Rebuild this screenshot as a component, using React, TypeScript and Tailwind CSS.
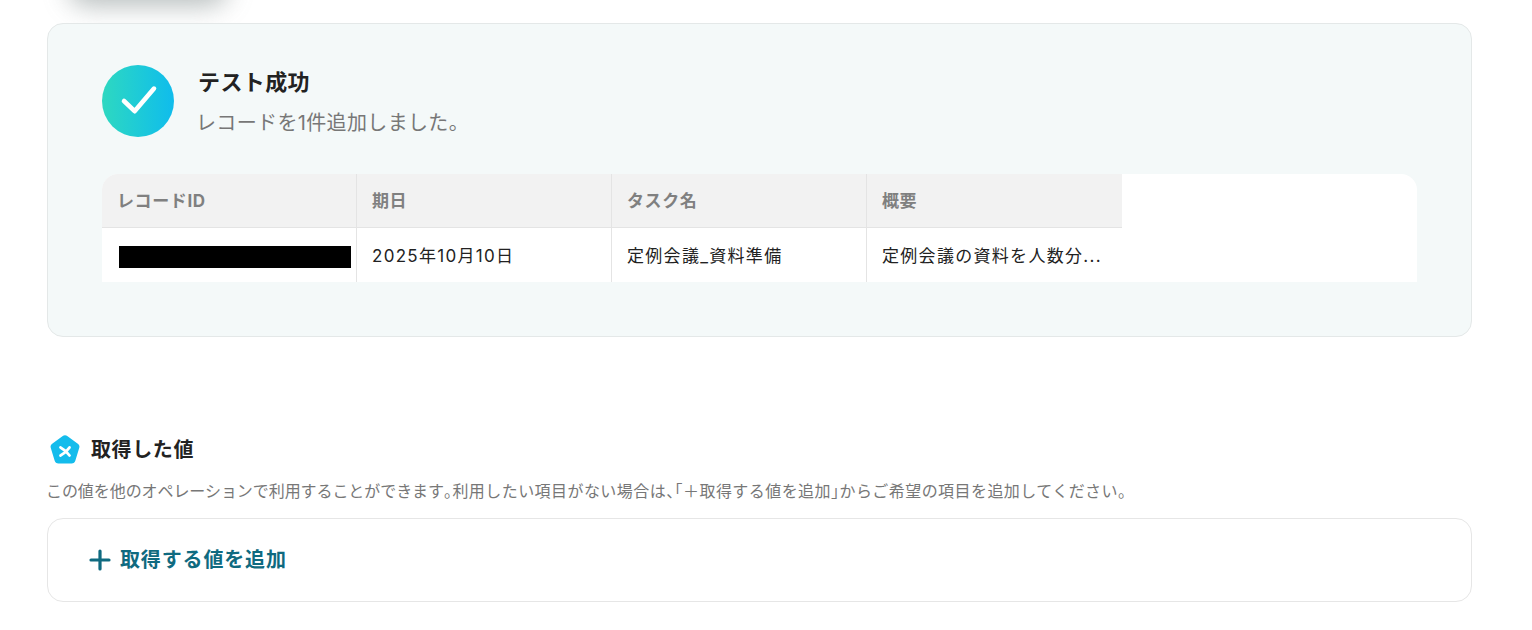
import React from "react";

const columns = ["レコードID", "期日", "タスク名", "概要"];

const Logo = () => (
  <svg width="32" height="32" viewBox="0 0 32 32" className="shrink-0 mt-[2px]">
    <path
      d="M13.4 1.3a4.4 4.4 0 0 1 5.2 0l10.2 7.4a3.8 3.8 0 0 1 1.4 4.3l-3.8 12.5a4 4 0 0 1-3.9 2.9H9.5a4 4 0 0 1-3.9-2.9L1.8 13a3.8 3.8 0 0 1 1.4-4.3z"
      fill="#14bcec"
    />
    <path d="M11.5 12.5c3.2 1.6 6 4.2 9 8M20.5 12.5c-2.2 3.4-5 6-9 8" fill="none" stroke="#fff" strokeWidth="2.8" strokeLinecap="round" />
  </svg>
);

const App = () => {
  return (
    <div className="relative w-[1532px] h-[630px] overflow-hidden bg-white font-['Inter','Noto_Sans_CJK_JP',sans-serif]">
      <div className="absolute left-[68px] top-[-34px] w-[160px] h-[40px] rounded-full bg-[#9aa3a3] blur-[13px] opacity-70" />

      <div className="relative px-[47px] pt-[23px] w-[1519px]">
        <section className="h-[314px] rounded-2xl border border-[#e4e8e8] bg-[#f4f9f9] pt-[41px] pl-[54px] pr-[54px]">
          <div className="flex gap-6">
            <div className="w-[72px] h-[72px] rounded-full bg-gradient-to-r from-[#2ed8c0] to-[#10bcec] flex items-center justify-center">
              <svg width="38" height="32" viewBox="0 0 38 32" fill="none" className="mt-[-2px] ml-[1px]">
                <path d="M4 17L14.6 27.2L34 4.6" stroke="#fff" strokeWidth="4.6" strokeLinecap="round" strokeLinejoin="round" />
              </svg>
            </div>
            <div className="flex flex-col">
              <h2 className="text-[22px] leading-[34px] font-bold tracking-[0.4px] text-[#222]">テスト成功</h2>
              <p className="mt-[7px] ml-[-2px] text-xl leading-[34px] tracking-[0.35px] text-[#777]">レコードを1件追加しました。</p>
            </div>
          </div>

          <div className="mt-[34px] h-[108px] rounded-t-2xl bg-white overflow-hidden flex">
            {columns.map((c) => (
              <div key={c} className="w-[255px] bg-[#f2f2f2] h-[54px] border-b border-[#e4e4e4] border-r last:border-r-0 pl-[15px] text-[17px] font-bold leading-[54px] tracking-[0.6px] text-[#808080]">
                {c}
              </div>
            ))}
          </div>
          <div className="mt-[-54px] relative flex h-[54px] text-[#222] text-[17px] tracking-[1.3px]">
            <div className="w-[255px] border-r border-[#e4e4e4] pl-[17px] pr-[5px] pt-[18px]">
              <div className="h-[22px] bg-black" />
            </div>
            <div className="w-[255px] border-r border-[#e4e4e4] pl-[15px] leading-[56px]">2025年10月10日</div>
            <div className="w-[255px] border-r border-[#e4e4e4] pl-[15px] leading-[56px]">定例会議_資料準備</div>
            <div className="w-[255px] pl-[15px] leading-[56px]">定例会議の資料を人数分...</div>
          </div>
        </section>

        <div className="mt-[97px] h-[32px] flex items-center gap-[10px] pl-[2px]">
          <Logo />
          <h3 className="text-xl leading-[32px] font-bold tracking-[0.6px] text-[#222]">取得した値</h3>
        </div>
        <p className="mt-[13px] ml-[-1px] text-base leading-[24px] tracking-[0.44px] text-[#777]">
          <span className="tracking-[-0.07px]">この値を他のオペレーションで利用することができます</span><span className="[font-feature-settings:'halt']">。</span>利用したい項目がない場合は<span className="[font-feature-settings:'halt']">、「</span>＋取得する値を追加<span className="[font-feature-settings:'halt']">」</span>からご希望の項目を追加してください。
        </p>
        <div className="mt-[15px] h-[84px] rounded-2xl border border-[#e6e6e6] flex items-center pl-[41px] gap-[9px] text-[#0f6a80]">
          <svg width="22" height="22" viewBox="0 0 22 22" fill="none">
            <path d="M11 2v18M2 11h18" stroke="#0f6a80" strokeWidth="3.2" strokeLinecap="round" />
          </svg>
          <span className="text-xl font-bold leading-[32px] tracking-[0.85px]">取得する値を追加</span>
        </div>
      </div>
    </div>
  );
};

export default App;
